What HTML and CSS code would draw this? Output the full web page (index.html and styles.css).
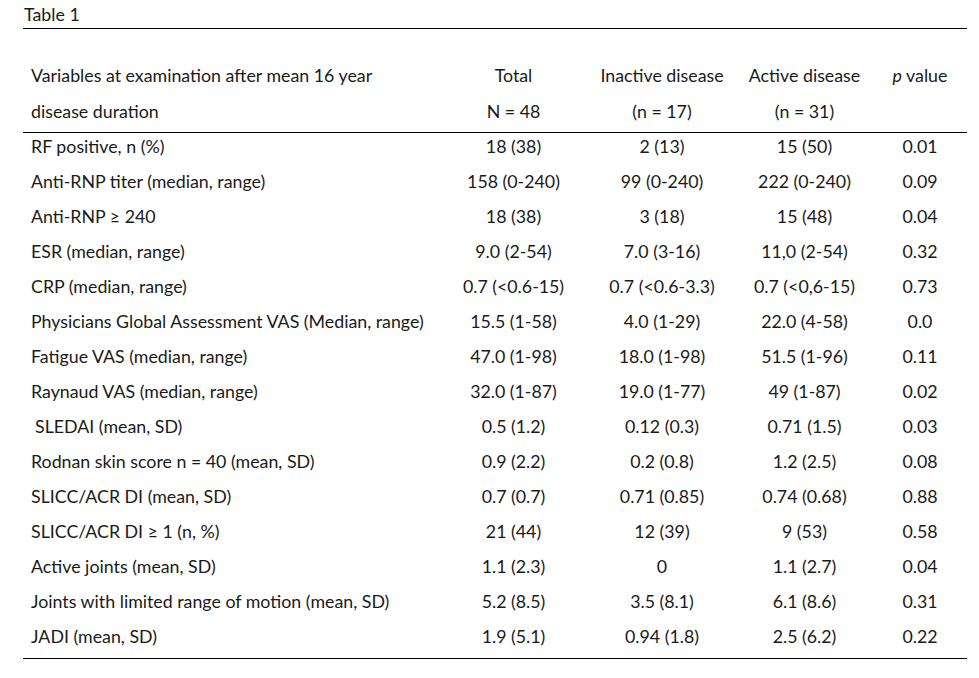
FILE: index.html
```html
<!DOCTYPE html>
<html lang="en">
<head>
<meta charset="utf-8">
<title>Table 1</title>
<link rel="stylesheet" href="styles.css">
</head>
<body>
<div class="page">
  <div class="caption">Table 1</div>
  <table class="data">
    <colgroup>
      <col class="c-var">
      <col class="c-total">
      <col class="c-inactive">
      <col class="c-active">
      <col class="c-p">
    </colgroup>
    <thead>
      <tr class="h1">
        <th class="label">Variables at examination after mean 16 year</th>
        <th>Total</th>
        <th>Inactive disease</th>
        <th>Active disease</th>
        <th><i>p</i> value</th>
      </tr>
      <tr class="h2">
        <th class="label">disease duration</th>
        <th>N = 48</th>
        <th>(n = 17)</th>
        <th>(n = 31)</th>
        <th></th>
      </tr>
    </thead>
    <tbody>
      <tr><td class="label">RF positive, n (%)</td><td>18 (38)</td><td>2 (13)</td><td>15 (50)</td><td>0.01</td></tr>
      <tr><td class="label">Anti-RNP titer (median, range)</td><td>158 (0-240)</td><td>99 (0-240)</td><td>222 (0-240)</td><td>0.09</td></tr>
      <tr><td class="label">Anti-RNP ≥ 240</td><td>18 (38)</td><td>3 (18)</td><td>15 (48)</td><td>0.04</td></tr>
      <tr><td class="label">ESR (median, range)</td><td>9.0 (2-54)</td><td>7.0 (3-16)</td><td>11,0 (2-54)</td><td>0.32</td></tr>
      <tr><td class="label">CRP (median, range)</td><td>0.7 (&lt;0.6-15)</td><td>0.7 (&lt;0.6-3.3)</td><td>0.7 (&lt;0,6-15)</td><td>0.73</td></tr>
      <tr><td class="label">Physicians Global Assessment VAS (Median, range)</td><td>15.5 (1-58)</td><td>4.0 (1-29)</td><td>22.0 (4-58)</td><td>0.0</td></tr>
      <tr><td class="label">Fatigue VAS (median, range)</td><td>47.0 (1-98)</td><td>18.0 (1-98)</td><td>51.5 (1-96)</td><td>0.11</td></tr>
      <tr><td class="label">Raynaud VAS (median, range)</td><td>32.0 (1-87)</td><td>19.0 (1-77)</td><td>49 (1-87)</td><td>0.02</td></tr>
      <tr><td class="label indent">SLEDAI (mean, SD)</td><td>0.5 (1.2)</td><td>0.12 (0.3)</td><td>0.71 (1.5)</td><td>0.03</td></tr>
      <tr><td class="label">Rodnan skin score n = 40 (mean, SD)</td><td>0.9 (2.2)</td><td>0.2 (0.8)</td><td>1.2 (2.5)</td><td>0.08</td></tr>
      <tr><td class="label">SLICC/ACR DI (mean, SD)</td><td>0.7 (0.7)</td><td>0.71 (0.85)</td><td>0.74 (0.68)</td><td>0.88</td></tr>
      <tr><td class="label">SLICC/ACR DI ≥ 1 (n, %)</td><td>21 (44)</td><td>12 (39)</td><td>9 (53)</td><td>0.58</td></tr>
      <tr><td class="label">Active joints (mean, SD)</td><td>1.1 (2.3)</td><td>0</td><td>1.1 (2.7)</td><td>0.04</td></tr>
      <tr><td class="label">Joints with limited range of motion (mean, SD)</td><td>5.2 (8.5)</td><td>3.5 (8.1)</td><td>6.1 (8.6)</td><td>0.31</td></tr>
      <tr><td class="label">JADI (mean, SD)</td><td>1.9 (5.1)</td><td>0.94 (1.8)</td><td>2.5 (6.2)</td><td>0.22</td></tr>
    </tbody>
  </table>
</div>
</body>
</html>
```

FILE: styles.css
```css
html, body {
  margin: 0;
  padding: 0;
  background: #ffffff;
}

body {
  font-family: Lato, "Liberation Sans", sans-serif;
  font-size: 17.8px;
  color: #1a1a1a;
}

.page {
  padding-left: 23px;
}

.caption {
  box-sizing: border-box;
  height: 28px;
  padding-top: 1px;
  padding-left: 1px;
  line-height: 27px;
}

.data {
  width: 944px;
  border-collapse: separate;
  border-spacing: 0;
  border-top: 1px solid #000;
  border-bottom: 1px solid #000;
  table-layout: fixed;
}

.c-var { width: 416px; }
.c-total { width: 149px; }
.c-inactive { width: 148px; }
.c-active { width: 137px; }
.c-p { width: 94px; }

.data th,
.data td {
  padding: 0;
  font-weight: normal;
  text-align: center;
  line-height: 26px;
  white-space: nowrap;
}

.data .label {
  text-align: left;
  padding-left: 8px;
}

.data .indent {
  padding-left: 12px;
}

.data .h1 th {
  padding-top: 33px;
  padding-bottom: 10px;
}

.data .h2 th {
  padding-top: 0;
  padding-bottom: 8px;
  border-bottom: 1px solid #000;
}

.data td {
  padding-top: 0;
  padding-bottom: 9px;
}

.data td.label {
  padding-bottom: 9px;
}
```
